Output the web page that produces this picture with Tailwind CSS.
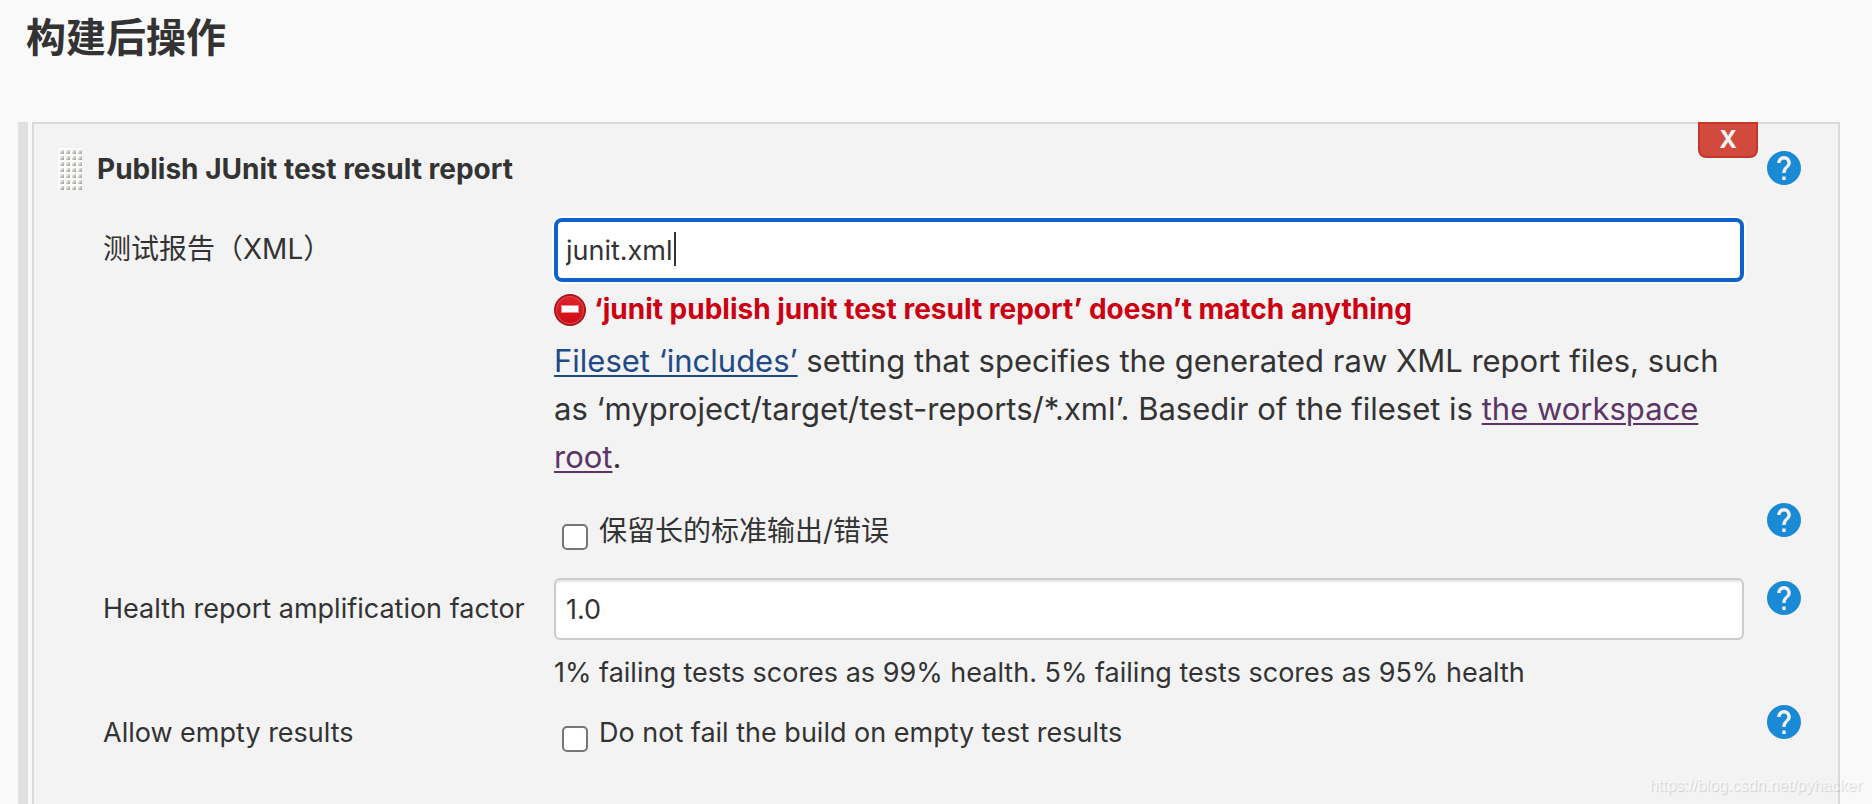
<!DOCTYPE html>
<html lang="zh-CN">
<head>
  <meta charset="UTF-8" />
  <meta name="viewport" content="width=device-width, initial-scale=1.0"/>
  <title>构建后操作</title>
  <script src="https://cdn.jsdelivr.net/npm/@tailwindcss/browser@4"></script>
</head>
<body class="relative flex h-screen flex-col overflow-hidden bg-[#f9f9f9] font-[Inter,'Noto_Sans_CJK_SC',sans-serif] text-[27px] leading-[34px] text-[#333]">

  <!-- Shared icons -->
  <svg class="hidden">
    <symbol id="help" viewBox="2 2 20 20">
      <path fill="#1a8ad6" d="M12 2C6.48 2 2 6.48 2 12s4.48 10 10 10 10-4.48 10-10S17.52 2 12 2zm1 17h-2v-2h2v2zm2.07-7.75l-.9.92C13.45 12.9 13 13.5 13 15h-2v-.5c0-1.1.45-2.1 1.17-2.83l1.24-1.26c.37-.36.59-.86.59-1.41 0-1.1-.9-2-2-2s-2 .9-2 2H8c0-2.21 1.79-4 4-4s4 1.79 4 4c0 .88-.36 1.68-.93 2.25z"/>
    </symbol>
  </svg>

  <h1 class="mb-[54px] px-[26px] pt-2 text-[40px] leading-[60px] font-bold">构建后操作</h1>

  <main class="flex grow gap-1 pr-8 pl-[18px]">
    <div class="w-2.5 shrink-0 bg-[#e0e0e0]"></div>

    <form class="relative grow border-2 border-b-0 border-[#d9d9d9] bg-[#f3f3f3] pt-6 pr-[37px] pl-6">
      <button type="button" class="absolute -top-0.5 right-20 h-9 w-[60px] rounded-b-lg border-2 border-[#c0392b] bg-[#d24a3e] text-2xl leading-none font-bold text-[#f3f3f3]">X</button>

      <!-- Step title -->
      <div class="mb-7 flex items-start">
        <svg class="mr-[15px] h-[42px] w-6 shrink-0" viewBox="0 0 24 42">
          <defs>
            <linearGradient id="dot" x1="0" y1="0" x2="1" y2="1">
              <stop offset="0.2" stop-color="#eeeeec"/>
              <stop offset="0.8" stop-color="#a8a8a4"/>
            </linearGradient>
            <pattern id="grip" width="6" height="6" patternUnits="userSpaceOnUse">
              <rect width="6" height="6" fill="#fbfbf9"/>
              <rect x="2" y="2" width="4" height="4" fill="url(#dot)"/>
            </pattern>
          </defs>
          <rect width="24" height="42" fill="url(#grip)"/>
        </svg>
        <h2 class="grow text-[28px] leading-[42px] font-bold">Publish JUnit test result report</h2>
        <a href="#" aria-label="Help" class="mt-[3px]"><svg class="size-[34px]"><use href="#help"/></svg></a>
      </div>

      <!-- Test report XMLs -->
      <div class="mb-[22px] grid grid-cols-[451px_1fr_57px] pl-[45px]">
        <label for="reports" class="pt-3.5 text-[28px]">测试报告（XML）</label>
        <div>
          <div class="relative">
            <input id="reports" type="text" value="junit.xml" class="block h-16 w-full rounded-lg border-4 border-[#0f62cb] bg-white px-2 ring-2 ring-white outline-none" />
            <span class="absolute top-3.5 left-[120px] h-[34px] w-0.5 bg-[#333]"></span>
          </div>
          <div class="mt-3 mb-[11px] flex items-start gap-2 text-[28px] leading-[30px] font-bold text-[#cc0011]">
            <svg class="size-8 shrink-0" viewBox="0 0 32 32">
              <defs>
                <linearGradient id="stop" x1="0" y1="0" x2="0" y2="1">
                  <stop offset="0" stop-color="#e0242a"/>
                  <stop offset="1" stop-color="#d00a14"/>
                </linearGradient>
              </defs>
              <circle cx="16" cy="16" r="16" fill="#a9151b"/>
              <circle cx="16" cy="16" r="14" fill="#d84a4e"/>
              <circle cx="16" cy="16" r="13" fill="url(#stop)"/>
              <rect x="7.5" y="11.5" width="17" height="7" fill="#fff" stroke="#e88" stroke-width="1"/>
            </svg>
            <span>‘junit publish junit test result report’ doesn’t match anything</span>
          </div>
          <p class="text-[31px] leading-[48px]">
            <a href="#" class="text-[#204a87] underline decoration-2 underline-offset-[3px]">Fileset ‘includes’</a>
            setting that specifies the generated raw XML report files, such as ‘myproject/target/test-reports/*.xml’. Basedir of the fileset is
            <a href="#" class="text-[#5c3566] underline decoration-2 underline-offset-[3px]">the workspace root</a>.
          </p>
        </div>
      </div>

      <!-- Keep long output -->
      <div class="mb-7 grid grid-cols-[451px_1fr_34px] pl-[45px]">
        <div></div>
        <div class="flex gap-[11px] pl-2">
          <input id="keep" type="checkbox" class="mt-[21px] size-[26px] shrink-0 appearance-none rounded-[5px] border-2 border-[#767676] bg-white" />
          <label for="keep" class="pt-[11px] text-[28px]">保留长的标准输出/错误</label>
        </div>
        <a href="#" aria-label="Help"><svg class="size-[34px]"><use href="#help"/></svg></a>
      </div>

      <!-- Health factor -->
      <div class="mb-3 grid grid-cols-[451px_1fr_57px] pl-[45px]">
        <label for="factor" class="pt-3.5">Health report amplification factor</label>
        <div>
          <input id="factor" type="text" value="1.0" class="block h-[62px] w-full rounded-md border-2 border-[#ccc] bg-white px-2.5 inset-shadow-[0_2px_2px_#0000001a] outline-none" />
          <p class="mt-[13px] leading-10">1% failing tests scores as 99% health. 5% failing tests scores as 95% health</p>
        </div>
        <a href="#" aria-label="Help" class="mt-[3px] justify-self-end"><svg class="size-[34px]"><use href="#help"/></svg></a>
      </div>

      <!-- Empty results -->
      <div class="grid grid-cols-[451px_1fr_34px] pl-[45px]">
        <div class="pt-[11px]">Allow empty results</div>
        <div class="flex gap-[11px] pl-2">
          <input id="empty" type="checkbox" class="mt-[21px] size-[26px] shrink-0 appearance-none rounded-[5px] border-2 border-[#767676] bg-white" />
          <label for="empty" class="pt-[11px]">Do not fail the build on empty test results</label>
        </div>
        <a href="#" aria-label="Help"><svg class="size-[34px]"><use href="#help"/></svg></a>
      </div>
    </form>
  </main>

  <div class="absolute right-2.5 bottom-1.5 font-['Liberation_Sans',sans-serif] text-base leading-6 text-white/70 text-shadow-[1px_1px_1px_#00000026]">https://blog.csdn.net/pyhacker</div>

</body>
</html>
